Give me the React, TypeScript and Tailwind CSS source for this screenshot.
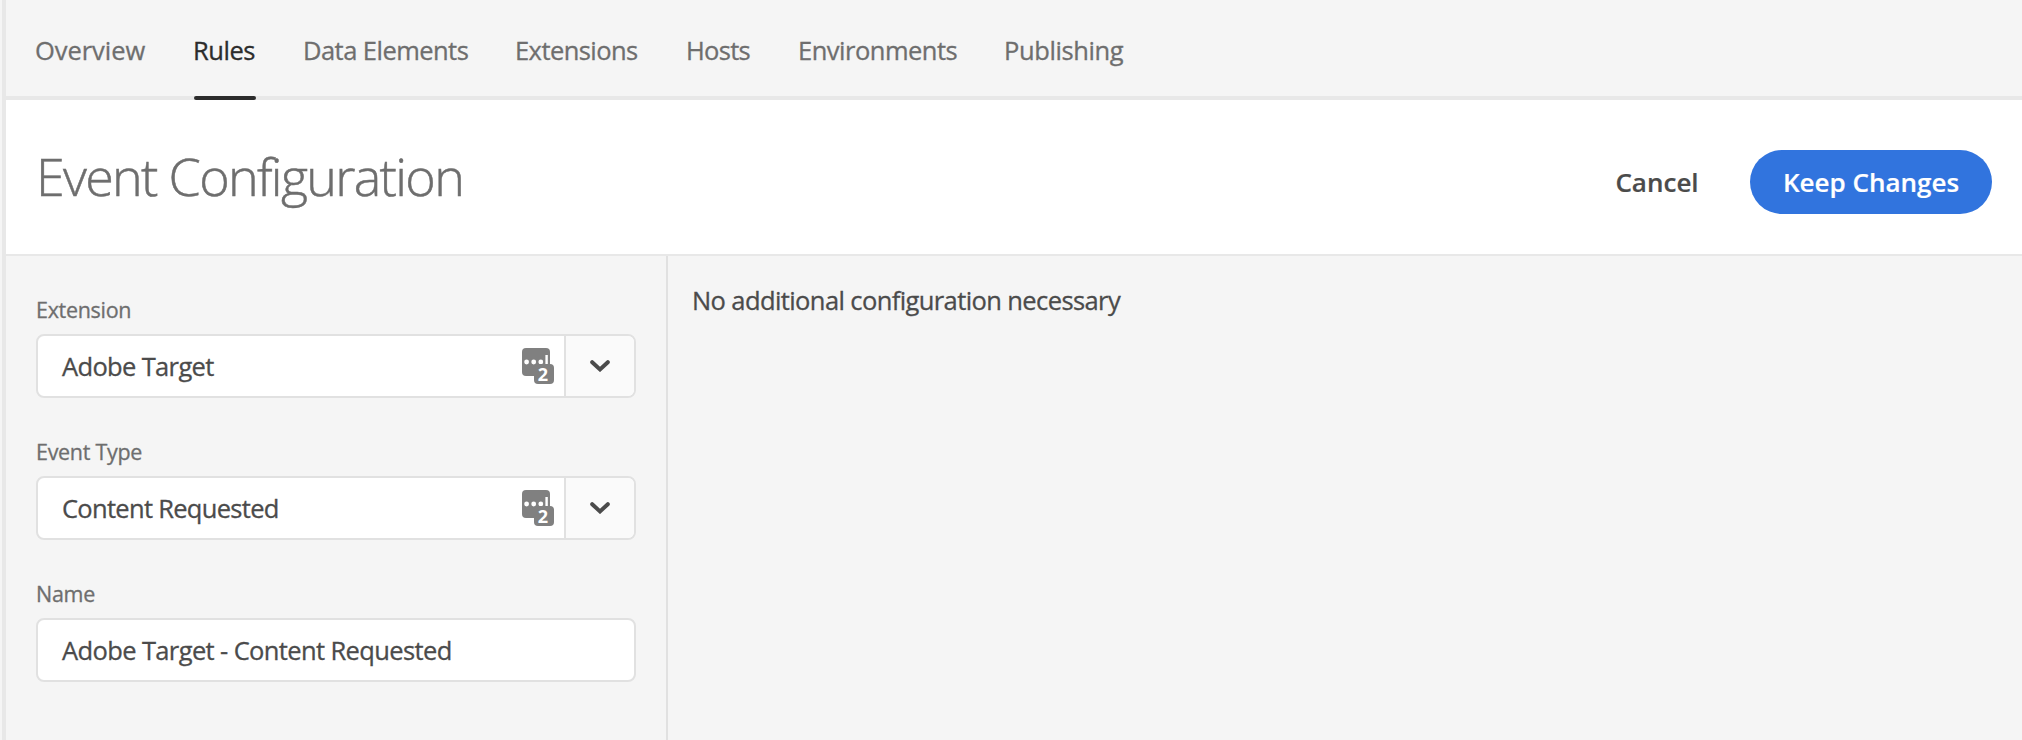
const tabs = [
  { label: "Overview", box: "w-[110px]", track: "tracking-[-0.05px]" },
  { label: "Rules", box: "w-[62px]", track: "tracking-[-0.45px]", active: true },
  { label: "Data Elements", box: "w-[164px]", track: "tracking-[-0.54px]" },
  { label: "Extensions", box: "w-[123px]", track: "tracking-[-0.57px]" },
  { label: "Hosts", box: "w-[64px]", track: "tracking-[-0.7px]" },
  { label: "Environments", box: "w-[158px]", track: "tracking-[-0.5px]" },
  { label: "Publishing", box: "w-[120px]", track: "tracking-[-0.4px]" },
];

function AutofillBadge() {
  return (
    <svg className="block h-10 w-8 shrink-0 overflow-visible" viewBox="0 0 32 40">
      <rect width="28" height="28" rx="4" fill="#808080" />
      <g fill="#fff">
        <circle cx="4.6" cy="14" r="2.4" />
        <circle cx="11.7" cy="14" r="2.4" />
        <circle cx="18.8" cy="14" r="2.4" />
        <rect x="23.4" y="7" width="2.4" height="10" />
      </g>
      <rect x="12" y="16" width="20" height="20" rx="4" fill="#808080" />
      <text x="21" y="33" textAnchor="middle" fontFamily="Open Sans, sans-serif" fontSize="18" fontWeight="700" fill="#fff">
        2
      </text>
    </svg>
  );
}

function Chevron() {
  return (
    <svg className="block h-3 w-5" viewBox="0 0 20 12" fill="none" stroke="#4b4b4b" strokeWidth="4" strokeLinecap="round" strokeLinejoin="miter">
      <path d="M2.2 2.2 10 9.4l7.8-7.2" />
    </svg>
  );
}

function Field({ label, value, track, select }: { label: string; value: string; track: string; select?: boolean }) {
  return (
    <div className="flex flex-col">
      <label className="h-[42px] pt-px text-[21.5px] leading-[34px] tracking-[-0.3px] text-[#6e6e6e]">{label}</label>
      <div className="flex h-16 w-[600px] overflow-hidden rounded-lg border-2 border-[#e1e1e1] bg-white">
        <div className={`flex-1 pl-6 text-[25.5px] leading-[60px] whitespace-nowrap text-[#4b4b4b] ${track}`}>{value}</div>
        {select && (
          <>
            <div className="flex w-[42px] pt-3">
              <AutofillBadge />
            </div>
            <button className="flex w-[70px] items-center justify-center border-l-2 border-[#e1e1e1] bg-[#fafafa]">
              <Chevron />
            </button>
          </>
        )}
      </div>
    </div>
  );
}

export default function App() {
  return (
    <div className="flex h-[740px] w-[2022px] overflow-hidden bg-[#f5f5f5] font-['Open_Sans',sans-serif] [-webkit-text-stroke:0.3px]">
      <div className="ml-0.5 w-1 shrink-0 bg-[#e8e8e8]" />
      <div className="flex min-w-0 flex-1 flex-col">
        <nav className="flex h-[100px] shrink-0 gap-12 border-b-4 border-[#e8e8e8] pl-[30px]">
          {tabs.map((t) => (
            <a
              key={t.label}
              className={`h-[100px] shrink-0 whitespace-nowrap ${t.box} ${t.active ? "text-[#2c2c2c]" : "text-[#6e6e6e]"}`}
            >
              <span className={`-ml-px block h-24 pt-[33px] text-[25.5px] leading-[34px] ${t.track}`}>{t.label}</span>
              {t.active && <span className="block h-1 rounded-xs bg-[#2c2c2c]" />}
            </a>
          ))}
        </nav>
        <header className="flex h-[156px] shrink-0 items-center justify-between border-b-2 border-[#e8e8e8] bg-white pr-[30px] pl-[30px]">
          <h1 className="pb-0.5 text-[52px] leading-[70px] font-light tracking-[-1.7px] text-[#6e6e6e] [-webkit-text-stroke:0.5px]">Event Configuration</h1>
          <div className="flex items-center pt-[10px] text-[26px] font-semibold [-webkit-text-stroke:0.2px]">
            <button className="w-[86px] text-center whitespace-nowrap text-[#4b4b4b]">Cancel</button>
            <button className="ml-[50px] h-16 w-[242px] rounded-full bg-[#3174de] text-white">Keep Changes</button>
          </div>
        </header>
        <main className="flex min-h-0 flex-1">
          <section className="flex w-[662px] shrink-0 flex-col gap-9 border-r-2 border-[#e1e1e1] pt-9 pl-[30px]">
            <Field label="Extension" value="Adobe Target" track="tracking-[-0.65px]" select />
            <Field label="Event Type" value="Content Requested" track="tracking-[-0.7px]" select />
            <Field label="Name" value="Adobe Target - Content Requested" track="tracking-[-0.62px]" />
          </section>
          <p className="pt-[26px] pl-6 text-[25.5px] leading-[36px] tracking-[-0.6px] text-[#4b4b4b]">
            No additional configuration necessary
          </p>
        </main>
      </div>
    </div>
  );
}
